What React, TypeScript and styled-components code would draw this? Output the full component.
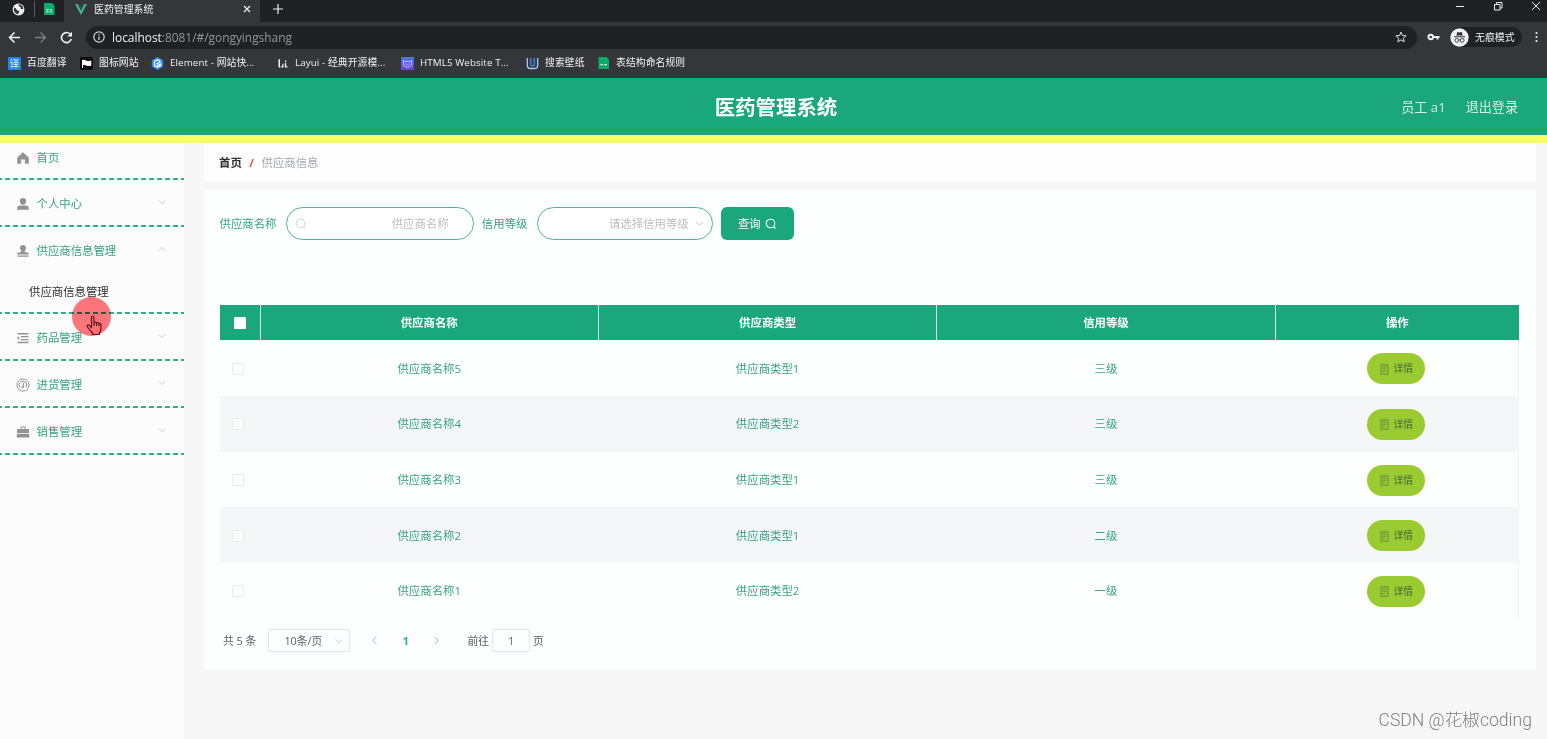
import React from 'react';
import styled, { createGlobalStyle } from 'styled-components';

const green = '#1aa779';

const GlobalStyle = createGlobalStyle`
  * { box-sizing: border-box; }
  body {
    margin: 0;
    background: #f7f7f7;
    font-family: "Open Sans", "Noto Sans CJK SC", sans-serif;
    font-size: 11.4px;
    line-height: 16px;
    overflow: hidden;
  }
`;

const Page = styled.div`
  position: relative;
  width: 1547px;
  height: 739px;
  overflow: hidden;
  white-space: nowrap;
`;

/* ---------- browser window ---------- */

const Chrome = styled.div`
  height: 78px;
  background: #35363a;
  color: #f1f1f3;
`;

const TabStrip = styled.div`
  display: flex;
  align-items: stretch;
  height: 22px;
  background: #202124;
`;

const PinnedTabs = styled.div`
  display: flex;
  align-items: center;
  width: 64px;
  padding: 0 9px 4px 12px;
  justify-content: space-between;
`;

const TabDivider = styled.i`
  width: 1px;
  height: 16px;
  background: #5b5c60;
`;

const ActiveTab = styled.div`
  display: flex;
  align-items: center;
  width: 196px;
  padding: 0 9px 4px 11px;
  background: #35363a;
  font-size: 9.9px;
`;

const TabTitle = styled.span`
  flex: 1;
  margin-left: 7px;
`;

const NewTab = styled.div`
  display: flex;
  padding: 4px 0 0 13px;
  flex: 1;
`;

const WindowButtons = styled.div`
  display: flex;
  gap: 28px;
  padding: 1px 6px 0 0;
`;

const Toolbar = styled.div`
  display: flex;
  align-items: center;
  height: 30px;
  padding: 0 0 0 8px;
`;

const NavIcons = styled.div`
  display: flex;
  gap: 13px;
  width: 78px;
`;

const AddressBar = styled.div`
  display: flex;
  align-items: center;
  width: 1331px;
  height: 23px;
  padding: 0 10px 0 7px;
  border-radius: 12px;
  background: #202124;
  font-size: 11.9px;
  color: #92959a;
`;

const Url = styled.span`
  flex: 1;
  margin-left: 7px;
  b { font-weight: 400; color: #f1f1f3; }
`;

const KeySlot = styled.div`
  display: flex;
  margin: 0 10px 0 10px;
`;

const Incognito = styled.div`
  display: flex;
  align-items: center;
  gap: 6px;
  width: 72px;
  height: 20px;
  margin-right: 13px;
  border-radius: 10px;
  background: #202124;
  font-size: 9.9px;
`;

const Bookmarks = styled.div`
  display: flex;
  align-items: center;
  height: 22px;
  padding-left: 8px;
  font-size: 9.8px;
  letter-spacing: 0.09px;
`;

const Bookmark = styled.div<{ $w: number }>`
  display: flex;
  align-items: center;
  gap: 6px;
  width: ${(p) => p.$w}px;
`;

/* ---------- application ---------- */

const Header = styled.header`
  display: grid;
  grid-template-columns: 1fr auto 1fr;
  align-items: center;
  height: 65px;
  padding: 0 29px 0 34px;
  background: ${green};
  border-bottom: 8px solid #f9ff66;
`;

const Title = styled.h1`
  grid-column: 2;
  margin: 0;
  font-size: 20.4px;
  line-height: 30px;
  font-weight: 700;
  color: #fff;
`;

const Account = styled.div`
  display: flex;
  justify-content: flex-end;
  gap: 20px;
  font-size: 13.1px;
  color: #d9ede5;
`;

const Body = styled.div`
  display: flex;
  height: 596px;
`;

const Sidebar = styled.nav`
  width: 184px;
  background: #fdfcfc;
`;

const MenuGroup = styled.div`
  padding-bottom: 2px;
  background: repeating-linear-gradient(90deg, #38ab88 0 5px, transparent 5px 8px) -3px 100% / 200px 2px no-repeat;
`;

const MenuItem = styled.div<{ $h: number; $top?: number; $lift?: number }>`
  display: flex;
  align-items: center;
  height: ${(p) => p.$h}px;
  padding: ${(p) => p.$top ?? 0}px 18px ${(p) => p.$lift ?? 0}px 16px;
  color: #35a380;
  span { flex: 1; margin-left: 6.5px; }
`;

const MenuArrow = styled.div`
  display: flex;
  margin-bottom: 4px;
`;

const SubItem = styled.div`
  height: 40px;
  padding: 12px 0 0 29px;
  color: #303133;
`;

const Content = styled.main`
  width: 1332px;
  margin-left: 20px;
`;

const Breadcrumb = styled.div`
  display: flex;
  align-items: center;
  height: 39px;
  padding: 1px 0 0 15px;
  background: #fdfdfe;
  color: #a2a7b1;
  b { color: #303133; font-weight: 700; }
  i { margin: 0 7.5px; color: #f4503c; font-style: normal; font-weight: 700; }
`;

const Card = styled.section`
  height: 480px;
  margin-top: 8px;
  padding: 17px 17px 0 15.5px;
  background: #fdfefe;
`;

const SearchRow = styled.div`
  display: flex;
  align-items: center;
  height: 33px;
  color: #35a380;
`;

const Field = styled.div<{ $w: number; $r: number }>`
  display: flex;
  align-items: center;
  justify-content: space-between;
  width: ${(p) => p.$w}px;
  height: 33px;
  margin: 0 8.2px 0 9.2px;
  padding: 0 ${(p) => p.$r}px 0 8px;
  border: 1px solid #4db696;
  border-radius: 17px;
  color: #bcbec2;
  background: #fff;
`;

const FieldHint = styled.span`
  flex: 1;
  text-align: right;
`;

const QueryButton = styled.button`
  display: flex;
  align-items: center;
  justify-content: center;
  gap: 4px;
  width: 73px;
  height: 33px;
  padding: 0;
  border: 0;
  border-radius: 6px;
  background: ${green};
  color: #fff;
  font: inherit;
`;

const Table = styled.div`
  margin-top: 65px;
  width: 1299.5px;
`;

const columns = '41px 338.4px 338.4px 338.4px 1fr';

const HeadRow = styled.div`
  display: grid;
  grid-template-columns: ${columns};
  height: 35.4px;
  background: ${green};
  color: #fff;
  font-weight: 700;
`;

const HeadCell = styled.div`
  display: flex;
  align-items: center;
  justify-content: center;
  padding-top: 1px;
  border-right: 1px solid #d5efe6;
  &:last-child { border-right: 0; }
`;

const Row = styled.div<{ $striped: boolean }>`
  display: grid;
  grid-template-columns: ${columns};
  height: 55.7px;
  color: #35a380;
  background: ${(p) => (p.$striped ? '#f4f6f7' : '#fdfefe')};
  border-right: 1px solid #f2f2f3;
`;

const Cell = styled.div`
  display: flex;
  align-items: center;
  justify-content: center;
  padding: 1px 1px 0 0;
`;

const Check = styled.i<{ $head?: boolean }>`
  width: 12px;
  height: 12px;
  border: 1px solid ${(p) => (p.$head ? '#fff' : '#e9ecec')};
  border-radius: 1px;
  background: #fff;
  margin-right: ${(p) => (p.$head ? 0 : 3)}px;
`;

const DetailButton = styled.button`
  display: flex;
  align-items: center;
  justify-content: center;
  gap: 5px;
  width: 58px;
  height: 31px;
  padding: 1px 0 0;
  border: 0;
  border-radius: 16px;
  background: #9acb30;
  color: #4c6138;
  font: inherit;
  font-size: 9.8px;
`;

const Pagination = styled.div`
  display: flex;
  align-items: center;
  height: 24px;
  margin-top: 10.1px;
  padding-left: 3.5px;
  font-size: 10.8px;
  color: #606266;
`;

const PageSize = styled.div`
  display: flex;
  align-items: center;
  justify-content: space-between;
  width: 82px;
  height: 23px;
  margin: 0 20px 0 12px;
  padding: 0 6px 0 15px;
  border: 1px solid #e2e4e8;
  border-radius: 2px;
`;

const CurrentPage = styled.b`
  width: 47px;
  margin: 0 3px;
  text-align: center;
  color: #22b58c;
`;

const PageJump = styled.div`
  width: 38px;
  height: 23px;
  margin: 0 3px 0 3px;
  border: 1px solid #e2e4e8;
  border-radius: 2px;
  line-height: 21px;
  text-align: center;
`;

const Jumper = styled.div`
  display: flex;
  align-items: center;
  margin-left: 26px;
`;

const ClickHalo = styled.div`
  position: absolute;
  left: 72px;
  top: 297px;
  width: 39px;
  height: 39px;
  border-radius: 50%;
  background: #ff767c;
  mix-blend-mode: multiply;
`;

const Pointer = styled.svg`
  position: absolute;
  left: 85px;
  top: 315px;
`;

const Watermark = styled.div`
  position: absolute;
  right: 15px;
  top: 708px;
  font-family: Roboto, "Noto Sans CJK SC", sans-serif;
  font-weight: 300;
  font-size: 17.6px;
  line-height: 24px;
  color: #808080;
`;

/* ---------- icons ---------- */

const Chevron = ({ dir = 'down', size = 8, color = '#bfc2c8' }: { dir?: 'down' | 'up' | 'left' | 'right'; size?: number; color?: string }) => {
  const d = { down: 'M1 3l4 4 4-4', up: 'M1 7l4-4 4 4', left: 'M7 1L3 5l4 4', right: 'M3 1l4 4-4 4' }[dir];
  return (
    <svg width={size} height={size} viewBox="0 0 10 10" fill="none" stroke={color} strokeWidth="1.1">
      <path d={d} />
    </svg>
  );
};

const SearchIcon = ({ color }: { color: string }) => (
  <svg width="12" height="12" viewBox="0 0 12 12" fill="none" stroke={color} strokeWidth="1.1">
    <circle cx="5.5" cy="5.5" r="4.3" />
    <path d="M8.6 8.6l2 2" />
  </svg>
);

const DocIcon = () => (
  <svg width="9" height="11" viewBox="0 0 9 11" fill="none" stroke="#5d7741" strokeWidth=".8">
    <path d="M1 .8h7v9.4H1zM2.5 3h4M2.5 5.2h4M2.5 7.5h2.5" />
  </svg>
);

const SheetIcon = () => (
  <svg width="12" height="12" viewBox="0 0 12 12">
    <path d="M1 0h8l2.5 2.5V12H1z" fill="#0bab68" />
    <path d="M3 6.3h2.6v1H3zm3.6 0h2.6v1H6.6zM3 8.3h2.6v1H3zm3.6 0h2.6v1H6.6z" fill="#d8f5e8" />
  </svg>
);

const menuIcons: Record<string, React.ReactNode> = {
  home: <path d="M7 1.3L1.2 6.5v6.2h3.9V8.6h3.8v4.1h3.9V6.5z" />,
  user: <path d="M7 1a3.2 3.2 0 0 1 3.2 3.3C10.2 6.2 9 7.7 7 7.7S3.8 6.2 3.8 4.3A3.2 3.2 0 0 1 7 1zM1.2 12.8V10.6Q1.5 8.7 4.3 8.5h5.4q2.8.2 3.1 2.1v2.2z" />,
  stamp: <path d="M7 1a3 3 0 0 1 3 3c0 1.5-1 2.3-1.3 3.3 0 .8.5 1 1.3 1.1h1.7q1 .2 1.1 1.200v1H1.200v-1q.1-1 1.100-1.200H4c.8-.1 1.300-.3 1.300-1.100C5 6.300 4 5.500 4 4a3 3 0 0 1 3-3zM1.500 11.500h11v1.200h-11z" />,
  list: <path d="M1.500 2h11v1.400h-11zM4.800 4.900h7.700v1.300H4.800zM4.800 7.900h7.700v1.300H4.800zM1.500 10.800h11v1.400h-11zM1.500 5.200v3.700L3.900 7z" />,
  gauge: (
    <g fill="none" stroke="#929396" strokeWidth="1">
      <circle cx="7" cy="7" r="6.100" />
      <path d="M3.900 9.300a4 4 0 0 1 0-4.700 4 4 0 0 1 6.200 0 4 4 0 0 1 0 4.700M8 4.300L7.200 8" />
      <circle cx="6.800" cy="9" r="1" />
    </g>
  ),
  case: <path d="M4.500 4V1.500h5V4h3q.5 0 .5.500V8H1V4.500Q1 4 1.500 4zm1-1.500V4h3V2.500zM.8 8.700h12.400v3.800H.8z" />,
};

const MenuIcon = ({ name }: { name: string }) => (
  <svg width="14" height="14" viewBox="0 0 14 14" fill="#929396">{menuIcons[name]}</svg>
);

/* ---------- data ---------- */

const menu = [
  { icon: 'user', label: '个人中心' },
  { icon: 'stamp', label: '供应商信息管理', child: '供应商信息管理' },
  { icon: 'list', label: '药品管理' },
  { icon: 'gauge', label: '进货管理' },
  { icon: 'case', label: '销售管理' },
];

const rows = [
  ['供应商名称5', '供应商类型1', '三级'],
  ['供应商名称4', '供应商类型2', '三级'],
  ['供应商名称3', '供应商类型1', '三级'],
  ['供应商名称2', '供应商类型1', '二级'],
  ['供应商名称1', '供应商类型2', '一级'],
];

const bookmarks: { label: string; w: number; icon: React.ReactNode }[] = [
  {
    label: '百度翻译', w: 72,
    icon: (
      <svg width="13" height="13" viewBox="0 0 13 13">
        <rect width="13" height="13" rx="1" fill="#2284f2" />
        <text x="6.5" y="10" fontSize="9.5" textAnchor="middle" fill="#fff">译</text>
      </svg>
    ),
  },
  {
    label: '图标网站', w: 71,
    icon: (
      <svg width="13" height="13" viewBox="0 0 13 13">
        <rect width="13" height="13" rx="2" fill="#0c0c0d" />
        <path d="M2 3q2-.8 4.300.4 2 1 5 0v5q-3 1-5 0-1.800-.8-3.300-.3V11H2z" fill="#fff" />
      </svg>
    ),
  },
  {
    label: 'Element - 网站快...', w: 125,
    icon: (
      <svg width="13" height="13" viewBox="0 0 13 13">
        <path d="M6.500 0l5.600 3.200v6.600L6.500 13 .9 9.800V3.200z" fill="#2c92ee" />
        <path d="M9.500 4.500L6.500 2.800 3.500 4.500v4l3 1.700 3-1.700V7L6 8.700M9.500 4.700L5.500 7" fill="none" stroke="#fff" strokeWidth="1.3" />
      </svg>
    ),
  },
  {
    label: 'Layui - 经典开源模...', w: 125,
    icon: (
      <svg width="13" height="13" viewBox="0 0 13 13" fill="#f0f0f0">
        <path d="M2.500 2.500l1.500-.5v7.500l1 1H2.500zM5.500 10.500V9l2-3v4.500zM9 3.500h1.300V5H9zM8.800 6h1.400v3.200h1.300v1.300H8.800z" />
      </svg>
    ),
  },
  {
    label: 'HTML5 Website T...', w: 125,
    icon: (
      <svg width="13" height="13" viewBox="0 0 13 13" fill="none">
        <defs><linearGradient id="vb" x1="0" y1="0" x2="0" y2="1"><stop stopColor="#4478e8" /><stop offset="1" stopColor="#7043cf" /></linearGradient></defs>
        <rect width="13" height="13" fill="url(#vb)" />
        <path d="M2.500 3.500l2 1h4l2-1v5l-4 2-4-2zM4.500 6.500l2 1.500 2-1.500" stroke="#b9c0fa" />
      </svg>
    ),
  },
  {
    label: '搜索壁纸', w: 71,
    icon: (
      <svg width="13" height="13" viewBox="0 0 13 13" fill="none">
        <path d="M1.300 1v7.500q0 3 3 3h4q3.400 0 3.400-3V1" stroke="#a9c9ee" strokeWidth="1.3" />
        <path d="M4.700 1v6q0 2 1.800 2T8.300 7V1" stroke="#3a82d4" strokeWidth="1.6" />
      </svg>
    ),
  },
  {
    label: '表结构命名规则', w: 110,
    icon: (
      <svg width="13" height="12" viewBox="0 0 12 12">
        <path d="M1 0h8l2.500 2.500V12H1z" fill="#0bab68" />
        <path d="M3 7h2.600v1.200H3zm3.600 0h2.600v1.200H6.600z" fill="#d8f5e8" />
      </svg>
    ),
  },
];

const BrowserChrome = () => (
  <Chrome>
    <TabStrip>
      <PinnedTabs>
        <svg width="13" height="13" viewBox="0 0 13 13">
          <circle cx="6.5" cy="6.5" r="5.9" fill="#f4f4f5" />
          <path d="M2 4.500q2 .5 2.500 2t2.500 1q1 1-.5 2.500L5.800 11.500Q2.500 10.500 1.800 7.500zM6.500 1.500q-.5 2 1.500 2.300 1.500.7.500 2 1.500 1 3-.3Q11 2.500 8 1.500z" fill="#35363a" />
        </svg>
        <TabDivider />
        <SheetIcon />
      </PinnedTabs>
      <ActiveTab>
        <svg width="12" height="11" viewBox="0 0 12 11">
          <path d="M0 0h2.600L6 6.300 9.400 0H12L6 11z" fill="#41b883" />
          <path d="M2.600 0h2L6 2.700 7.400 0h2L6 6.300z" fill="#35495e" />
        </svg>
        <TabTitle>医药管理系统</TabTitle>
        <svg width="8" height="8" viewBox="0 0 8 8" stroke="#eee" strokeWidth="1.3"><path d="M1 1l6 6M7 1L1 7" /></svg>
      </ActiveTab>
      <NewTab>
        <svg width="10" height="10" viewBox="0 0 10 10" stroke="#eee" strokeWidth="1.2"><path d="M5 0v10M0 5h10" /></svg>
      </NewTab>
      <WindowButtons>
        <svg width="10" height="10" viewBox="0 0 10 10" stroke="#eee"><path d="M1 5.500h8" /></svg>
        <svg width="10" height="10" viewBox="0 0 10 10" stroke="#eee" fill="none"><path d="M1.500 3.500h5.500V9H1.500zM3.500 3.500v-2H9V7H7" /></svg>
        <svg width="10" height="10" viewBox="0 0 10 10" stroke="#eee"><path d="M1 1l8 8M9 1L1 9" /></svg>
      </WindowButtons>
    </TabStrip>
    <Toolbar>
      <NavIcons>
        <svg width="13" height="13" viewBox="0 0 13 13" stroke="#f1f1f3" strokeWidth="1.5" fill="none"><path d="M12 6.500H2M6.500 1.500l-5 5 5 5" /></svg>
        <svg width="13" height="13" viewBox="0 0 13 13" stroke="#7c7d81" strokeWidth="1.3" fill="none"><path d="M1 6.500h10M6.500 1.500l5 5-5 5" /></svg>
        <svg width="13" height="13" viewBox="0 0 13 13" fill="none">
          <path d="M11.300 8A5 5 0 1 1 10 3" stroke="#f1f1f3" strokeWidth="1.6" />
          <path d="M12 .8v4.700H7.300z" fill="#f1f1f3" />
        </svg>
      </NavIcons>
      <AddressBar>
        <svg width="12" height="12" viewBox="0 0 12 12" fill="none" stroke="#d5d6d8" strokeWidth="1.2">
          <circle cx="6" cy="6" r="5.2" /><path d="M6 5.200V9M6 3v1.200" />
        </svg>
        <Url><b>localhost</b>:8081/#/gongyingshang</Url>
        <svg width="12" height="12" viewBox="0 0 12 12" fill="none" stroke="#dcdde0">
          <path d="M6 1l1.400 3.500 3.700.3-2.800 2.400.9 3.600L6 8.900l-3.200 1.900.9-3.600L.9 4.800l3.700-.3z" />
        </svg>
      </AddressBar>
      <KeySlot>
        <svg width="13" height="8" viewBox="0 0 13 8" fill="none" stroke="#f1f1f3" strokeWidth="1.9">
          <circle cx="3.7" cy="4" r="2.3" /><path d="M6 4h6.500M10.500 4v2.600" />
        </svg>
      </KeySlot>
      <Incognito>
        <svg width="19" height="19" viewBox="0 0 19 19">
          <circle cx="9.5" cy="9.5" r="9.2" fill="#f1f1f4" />
          <path d="M6.300 7.500l1-3.500 2.200.5 2.200-.5 1 3.500zM4 8.200h11v1H4z" fill="#303136" />
          <g fill="none" stroke="#303136" strokeWidth=".9"><circle cx="6.8" cy="12.3" r="1.9" /><circle cx="12.2" cy="12.3" r="1.9" /><path d="M8.700 12h1.600" /></g>
        </svg>
        无痕模式
      </Incognito>
      <svg width="3" height="12" viewBox="0 0 3 12" fill="#f1f1f3"><circle cx="1.5" cy="2" r="1.1" /><circle cx="1.5" cy="6" r="1.1" /><circle cx="1.5" cy="10" r="1.1" /></svg>
    </Toolbar>
    <Bookmarks>
      {bookmarks.map((b) => (
        <Bookmark key={b.label} $w={b.w}>{b.icon}{b.label}</Bookmark>
      ))}
    </Bookmarks>
  </Chrome>
);

export default function App() {
  return (
    <Page>
      <GlobalStyle />
      <BrowserChrome />
      <Header>
        <Title>医药管理系统</Title>
        <Account><span>员工 a1</span><span>退出登录</span></Account>
      </Header>
      <Body>
        <Sidebar>
          <MenuGroup>
            <MenuItem $h={35} $lift={6}><MenuIcon name="home" /><span>首页</span></MenuItem>
          </MenuGroup>
          {menu.map((m) => (
            <MenuGroup key={m.label}>
              <MenuItem $h={45} $top={3}>
                <MenuIcon name={m.icon} />
                <span>{m.label}</span>
                <MenuArrow><Chevron dir={m.child ? 'up' : 'down'} /></MenuArrow>
              </MenuItem>
              {m.child && <SubItem>{m.child}</SubItem>}
            </MenuGroup>
          ))}
        </Sidebar>
        <Content>
          <Breadcrumb><b>首页</b><i>/</i>供应商信息</Breadcrumb>
          <Card>
            <SearchRow>
              供应商名称
              <Field $w={188} $r={24}><SearchIcon color="#d5d8dc" /><FieldHint>供应商名称</FieldHint></Field>
              信用等级
              <Field $w={176} $r={8}><FieldHint>请选择信用等级&nbsp;&nbsp;</FieldHint><Chevron size={9} /></Field>
              <QueryButton>查询<SearchIcon color="#fff" /></QueryButton>
            </SearchRow>
            <Table>
              <HeadRow>
                <HeadCell><Check $head /></HeadCell>
                {['供应商名称', '供应商类型', '信用等级', '操作'].map((h) => <HeadCell key={h}>{h}</HeadCell>)}
              </HeadRow>
              {rows.map((r, i) => (
                <Row key={r[0]} $striped={i % 2 === 1}>
                  <Cell><Check /></Cell>
                  {r.map((c) => <Cell key={c}>{c}</Cell>)}
                  <Cell><DetailButton><DocIcon />详情</DetailButton></Cell>
                </Row>
              ))}
            </Table>
            <Pagination>
              共 5 条
              <PageSize>10条/页<Chevron /></PageSize>
              <Chevron dir="left" size={9} color="#a9abb0" />
              <CurrentPage>1</CurrentPage>
              <Chevron dir="right" size={9} color="#a9abb0" />
              <Jumper>前往<PageJump>1</PageJump>页</Jumper>
            </Pagination>
          </Card>
        </Content>
      </Body>
      <ClickHalo />
      <Pointer width="18" height="21" viewBox="0 0 18 21" fill="#ff7076" stroke="#57151c" strokeWidth="1.2" strokeLinejoin="round">
        <path d="M6.500 12.500V2.300q0-1.300 1.200-1.300T9 2.300V8q.2-1 1.200-1t1.300 1.200q.2-.8 1.200-.7t1.200 1.300q.3-.6 1.100-.4.900.2.900 1.300V14q0 2-1.500 4v1.500H7.500V18Q5 15.500 2.500 12 1.500 10.500 2.800 10q1-.3 2 .8zM9 8v3M11.500 8.500V11M13.900 9v2.300" />
      </Pointer>
      <Watermark>CSDN @花椒coding</Watermark>
    </Page>
  );
}
